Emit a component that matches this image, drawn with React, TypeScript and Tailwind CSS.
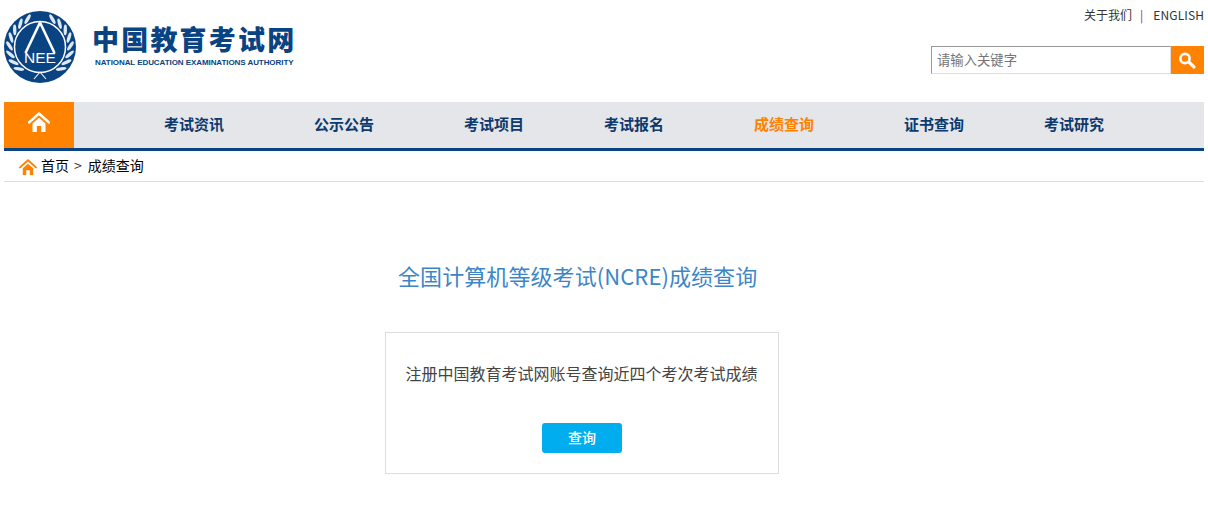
import React from "react";

const cjk = { fontFamily: '"Noto Sans CJK SC", "Noto Sans", sans-serif' };

const navItems: { label: string; w: string; active?: boolean }[] = [
  { label: "考试资讯", w: "w-[150px]" },
  { label: "公示公告", w: "w-[150px]" },
  { label: "考试项目", w: "w-[140px]" },
  { label: "考试报名", w: "w-[150px]" },
  { label: "成绩查询", w: "w-[150px]", active: true },
  { label: "证书查询", w: "w-[140px]" },
  { label: "考试研究", w: "w-[100px]" },
];

function HomeIcon({ className }: { className: string }) {
  return (
    <svg viewBox="0 0 22 20" className={className} fill="currentColor">
      <path d="M1 10.5 L11 1.5 L21 10.5" fill="none" stroke="currentColor" strokeWidth="2.4" strokeLinecap="round" strokeLinejoin="round" />
      <path d="M4.5 11.6 L11 5.8 L17.5 11.6 V20 H13.2 V14 H8.8 V20 H4.5 Z" />
    </svg>
  );
}

function SearchIcon() {
  return (
    <svg viewBox="0 0 33 28" className="w-[33px] h-[28px]" fill="none" stroke="#fff">
      <circle cx="14" cy="12.5" r="4.6" strokeWidth="2.6" />
      <path d="M18 16.2 L23 21" strokeWidth="3.2" strokeLinecap="round" />
    </svg>
  );
}

function Crest() {
  const leaves: React.ReactNode[] = [];
  const angles = [114, 130, 146, 162, 178, 194, 210, 226];
  angles.forEach((a) => {
    [a, 180 - a].forEach((ang, i) => {
      const r = (ang * Math.PI) / 180;
      const cx = 36 + 30.5 * Math.cos(r);
      const cy = 36 - 30.5 * Math.sin(r);
      leaves.push(
        <ellipse
          key={`${a}-${i}`}
          cx={cx}
          cy={cy}
          rx="5.4"
          ry="1.7"
          fill="#dfe8f2"
          transform={`rotate(${i === 0 ? -ang + 55 : -ang - 55} ${cx} ${cy})`}
        />
      );
    });
  });
  return (
    <svg viewBox="0 0 72 72" className="shrink-0 w-[72px] h-[72px]">
      <circle cx="36" cy="36" r="36" fill="#0a4382" />
      {leaves}
      <circle cx="36" cy="36" r="25.5" fill="#0a4382" stroke="#fff" strokeWidth="1.5" />
      <path d="M36 11.5 L21.5 42 M36 11.5 L50.5 42" stroke="#fff" strokeWidth="2.6" fill="none" />
      <path d="M30 68 L36 61 L42 68" stroke="#fff" strokeWidth="1.1" fill="none" />
      <text
        x="36"
        y="52"
        textAnchor="middle"
        fill="#fff"
        fontSize="15"
        fontFamily='"Liberation Sans", sans-serif'
        textLength="32"
        lengthAdjust="spacingAndGlyphs"
      >
        NEE
      </text>
    </svg>
  );
}

export default function App() {
  return (
    <div className="w-[1200px] mx-auto bg-white" style={cjk}>
      <header className="h-[102px] flex justify-between">
        <div className="flex items-start pt-[11px] gap-[18px]">
          <Crest />
          <div className="flex flex-col pt-[10px]">
            <div className="text-[27px] leading-[36px] font-black text-[#0a4382] tracking-[2.2px] -ml-[2px] w-[204px] whitespace-nowrap">
              中国教育考试网
            </div>
            <div
              className="text-[8px] leading-[10px] mt-[1px] ml-[1px] font-bold text-[#0a4382] whitespace-nowrap tracking-[-0.07px]"
              style={{ fontFamily: '"Liberation Sans", sans-serif' }}
            >
              NATIONAL EDUCATION EXAMINATIONS AUTHORITY
            </div>
          </div>
        </div>
        <div className="flex flex-col items-end">
          <div className="h-[46px] pt-[6px] text-[12px] leading-[18px] text-[#333] flex">
            <span>关于我们</span>
            <span className="ml-[8px] text-[#a0304a]">|</span>
            <span className="ml-[10px] tracking-[0.1px]">ENGLISH</span>
          </div>
          <div className="flex h-[28px]">
            <input
              placeholder="请输入关键字"
              className="w-[240px] h-[28px] px-[5px] pb-[1px] text-[13.33px] border border-t-[#999] border-l-[#999] border-r-[#ddd] border-b-[#ddd] outline-none placeholder:text-[#757575]"
              style={cjk}
            />
            <button className="w-[33px] h-[28px] bg-[#ff8200] flex items-center justify-center">
              <SearchIcon />
            </button>
          </div>
        </div>
      </header>

      <nav className="h-[49px] flex bg-[#e5e6ea] border-b-[3px] border-[#0a4382]">
        <a className="w-[70px] bg-[#ff8200] flex items-start justify-center pt-[10px] text-white">
          <HomeIcon className="w-[22px] h-[20px]" />
        </a>
        <div className="pl-[90px] flex">
          {navItems.map((n) => (
            <a
              key={n.label}
              className={`${n.w} text-[15px] leading-[44px] font-bold whitespace-nowrap ${
                n.active ? "text-[#ff8200]" : "text-[#0c3a6e]"
              }`}
            >
              {n.label}
            </a>
          ))}
        </div>
      </nav>

      <div className="h-[31px] border-b border-[#ddd] flex items-center pl-[15px] pb-[2px] text-[14px] text-black">
        <span className="text-[#ff8200] mt-[4px] flex">
          <HomeIcon className="w-[18px] h-[16px]" />
        </span>
        <span className="ml-[4px]">首页</span>
        <span className="ml-[5px] mr-[6px] text-[#333]">&gt;</span>
        <span>成绩查询</span>
      </div>

      <main className="pt-[75px] pb-[50px]">
        <h1 className="ml-[394px] text-[22px] leading-[36px] font-normal text-[#3d85c6] whitespace-nowrap tracking-[0.08px]">
          全国计算机等级考试(NCRE)成绩查询
        </h1>
        <section className="ml-[381px] mt-[39px] w-[394px] h-[142px] border border-[#ddd] flex flex-col items-center">
          <p className="mt-[28px] -ml-[1px] text-[16px] leading-[24px] text-[#444] whitespace-nowrap">
            注册中国教育考试网账号查询近四个考次考试成绩
          </p>
          <button className="mt-[38px] w-[80px] h-[30px] rounded-[3px] bg-[#00aeef] text-white text-[14px] leading-[28px] pb-[2px] font-medium" style={cjk}>
            查询
          </button>
        </section>
      </main>
    </div>
  );
}
